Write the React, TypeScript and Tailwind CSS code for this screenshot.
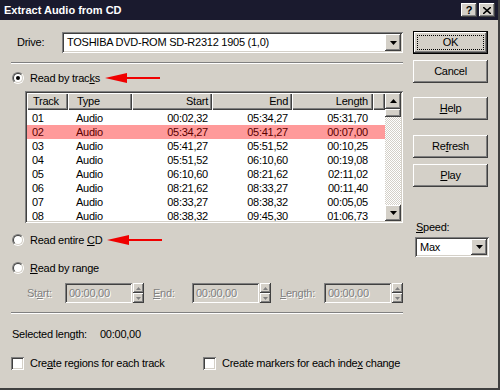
import React from "react";

const raised =
    "shadow-[inset_-1px_-1px_#404040,inset_1px_1px_#ffffff,inset_-2px_-2px_#808080,inset_2px_2px_#d4d0c8]";
const sunken =
    "shadow-[inset_1px_1px_#808080,inset_-1px_-1px_#ffffff,inset_2px_2px_#404040,inset_-2px_-2px_#d4d0c8]";
const headerCell = "shadow-[inset_1px_1px_#ffffff,inset_-1px_-1px_#404040,inset_-2px_-2px_#808080]";
const disabled = "text-[#808080] [text-shadow:1px_1px_#ffffff]";

const TRACKS = [
    ["01", "00:02,32", "05:34,27", "05:31,70"],
    ["02", "05:34,27", "05:41,27", "00:07,00"],
    ["03", "05:41,27", "05:51,52", "00:10,25"],
    ["04", "05:51,52", "06:10,60", "00:19,08"],
    ["05", "06:10,60", "08:21,62", "02:11,02"],
    ["06", "08:21,62", "08:33,27", "00:11,40"],
    ["07", "08:33,27", "08:38,32", "00:05,05"],
    ["08", "08:38,32", "09:45,30", "01:06,73"],
];

function Button({ children, mt, def }: { children: React.ReactNode; mt: string; def?: boolean }) {
    if (def) {
        return (
            <div className={`${mt} w-[75px] h-[23px] border border-black`}>
                <div className={`relative w-full h-full flex items-center justify-center ${raised}`}>
                    <span className="absolute inset-[3px] border border-dotted border-black" />
                    {children}
                </div>
            </div>
        );
    }
    return (
        <div className={`${mt} w-[75px] h-[23px] flex items-center justify-center ${raised}`}>
            {children}
        </div>
    );
}

function Triangle({ up }: { up?: boolean }) {
    return (
        <svg width="7" height="4" viewBox="0 0 7 4" className="block">
            <polygon points={up ? "3.5,0 7,4 0,4" : "0,0 7,0 3.5,4"} fill="#000" />
        </svg>
    );
}

function DropButton() {
    return (
        <div className={`w-[16px] h-full flex items-center justify-center bg-[#d4d0c8] ${raised}`}>
            <Triangle />
        </div>
    );
}

function Radio({ checked, children }: { checked?: boolean; children: React.ReactNode }) {
    return (
        <div className="flex items-center h-[14px]">
            <div className="ml-[12px] w-[12px] h-[12px] rounded-full border border-t-[#808080] border-l-[#808080] border-b-white border-r-white">
                <div className="w-full h-full rounded-full border border-t-[#404040] border-l-[#404040] border-b-[#d4d0c8] border-r-[#d4d0c8] bg-white flex items-center justify-center">
                    {checked && <div className="w-[4px] h-[4px] rounded-full bg-black" />}
                </div>
            </div>
            <span className="ml-[6px]">{children}</span>
        </div>
    );
}

function Check({ children, className }: { children: React.ReactNode; className: string }) {
    return (
        <div className={`flex items-center ${className}`}>
            <div className={`w-[13px] h-[13px] bg-white ${sunken}`} />
            <span className="ml-[6px]">{children}</span>
        </div>
    );
}

function RedArrow() {
    return (
        <svg width="56" height="12" viewBox="0 0 56 12" className="ml-[5px] block">
            <line x1="16" y1="6" x2="55" y2="6" stroke="#f00000" strokeWidth="2" />
            <polygon points="0,6 22,1 22,11" fill="#f00000" />
        </svg>
    );
}

function Spin() {
    return (
        <div className="ml-[1px] w-[11px] h-[20px] flex flex-col">
            <div className={`h-[10px] flex items-center justify-center ${raised}`}>
                <svg width="5" height="3" viewBox="0 0 5 3">
                    <polygon points="2.5,0 5,3 0,3" fill="#808080" />
                </svg>
            </div>
            <div className={`h-[10px] flex items-center justify-center ${raised}`}>
                <svg width="5" height="3" viewBox="0 0 5 3">
                    <polygon points="0,0 5,0 2.5,3" fill="#808080" />
                </svg>
            </div>
        </div>
    );
}

function TimeField({ label, labelW, ml, u }: { label: string; labelW: string; ml: string; u: number }) {
    return (
        <div className={`flex items-center ${ml}`}>
            <span className={`${labelW} ${disabled}`}>
                {label.slice(0, u)}
                <u>{label[u]}</u>
                {label.slice(u + 1)}
            </span>
            <div className={`w-[67px] h-[20px] pl-[4px] flex items-center bg-[#d4d0c8] ${sunken} ${disabled}`}>
                00:00,00
            </div>
            <Spin />
        </div>
    );
}

function TrackList() {
    return (
        <div className={`ml-[25px] mt-[6px] w-[378px] h-[132px] p-[2px] bg-white flex ${sunken}`}>
            <div className="w-[358px] h-full overflow-hidden">
                <div className="flex h-[17px] bg-[#d4d0c8]">
                    <div className={`w-[41px] pl-[6px] flex items-center ${headerCell}`}>Track</div>
                    <div className={`w-[64px] pl-[9px] flex items-center ${headerCell}`}>Type</div>
                    <div className={`w-[80px] pr-[4px] flex items-center justify-end ${headerCell}`}>Start</div>
                    <div className={`w-[80px] pr-[4px] flex items-center justify-end ${headerCell}`}>End</div>
                    <div className={`w-[81px] pr-[5px] flex items-center justify-end ${headerCell}`}>Length</div>
                    <div className={`flex-1 ${headerCell}`} />
                </div>
                <div className="pt-[1px]">
                    {TRACKS.map(([n, s, e, l]) => (
                        <div
                            key={n}
                            className={`flex h-[14px] items-center ${
                                n === "02" ? "bg-[#ff9a9a] text-[#5a0000]" : ""
                            }`}
                        >
                            <div className="w-[41px] pl-[5px]">{n}</div>
                            <div className="w-[64px] pl-[8px]">Audio</div>
                            <div className="w-[80px] pr-[4px] text-right">{s}</div>
                            <div className="w-[80px] pr-[4px] text-right">{e}</div>
                            <div className="w-[81px] pr-[5px] text-right">{l}</div>
                        </div>
                    ))}
                </div>
            </div>
            <div className="w-[16px] h-full flex flex-col">
                <div className={`h-[16px] flex items-center justify-center bg-[#d4d0c8] ${raised}`}>
                    <Triangle up />
                </div>
                <div className={`h-[8px] bg-[#d4d0c8] ${raised}`} />
                <div className="flex-1 bg-[repeating-conic-gradient(#ffffff_0_25%,#d4d0c8_0_50%)] bg-[length:2px_2px]" />
                <div className={`h-[16px] flex items-center justify-center bg-[#d4d0c8] ${raised}`}>
                    <Triangle />
                </div>
            </div>
        </div>
    );
}

function Separator({ mt }: { mt: string }) {
    return <div className={`${mt} ml-[11px] w-[392px] h-[2px] border-t border-t-[#808080] border-b border-b-white`} />;
}

export default function App() {
    return (
        <div className="w-[500px] h-[390px] bg-[#d4d0c8] flex flex-col text-[11px] leading-none text-black font-['Tahoma','Liberation_Sans',Arial,sans-serif] border-r-2 border-r-[#404040] border-b-2 border-b-[#404040]">
            <div className="h-[20px] shrink-0 bg-[#1a1a2e] flex items-center pl-[4px] pr-[3px]">
                <span className="font-bold text-white text-[11px]">Extract Audio from CD</span>
                <div className="ml-auto flex items-center gap-[2px]">
                    <div className={`w-[16px] h-[14px] bg-[#d4d0c8] flex items-center justify-center font-bold text-[11px] ${raised}`}>?</div>
                    <div className={`w-[16px] h-[14px] bg-[#d4d0c8] flex items-center justify-center ${raised}`}>
                        <svg width="8" height="7" viewBox="0 0 8 7">
                            <path d="M0 0L8 7M8 0L0 7" stroke="#000" strokeWidth="1.6" />
                        </svg>
                    </div>
                </div>
            </div>
            <div className="flex flex-1 tracking-[-0.25px]">
                <div className="w-[403px] flex flex-col">
                    <div className="mt-[12px] flex items-center h-[21px]">
                        <span className="ml-[17px] w-[45px]">Drive:</span>
                        <div className={`w-[341px] h-full p-[2px] bg-white flex ${sunken}`}>
                            <div className="flex-1 flex items-center pl-[3px]">TOSHIBA DVD-ROM SD-R2312 1905 (1,0)</div>
                            <DropButton />
                        </div>
                    </div>
                    <Separator mt="mt-[9px]" />
                    <div className="mt-[7px] flex items-center">
                        <Radio checked>
                            Read by trac<u>k</u>s
                        </Radio>
                        <RedArrow />
                    </div>
                    <TrackList />
                    <div className="mt-[10px] flex items-center">
                        <Radio>
                            Read entire <u>C</u>D
                        </Radio>
                        <RedArrow />
                    </div>
                    <div className="mt-[14px]">
                        <Radio>
                            <u>R</u>ead by range
                        </Radio>
                    </div>
                    <div className="mt-[8px] flex items-center">
                        <TimeField label="Start:" labelW="w-[38px]" ml="ml-[27px]" u={2} />
                        <TimeField label="End:" labelW="w-[39px]" ml="ml-[9px]" u={0} />
                        <TimeField label="Length:" labelW="w-[44px]" ml="ml-[9px]" u={0} />
                    </div>
                    <Separator mt="mt-[9px]" />
                    <div className="mt-[13px] h-[14px] flex items-center">
                        <span className="ml-[12px] w-[88px]">Selected length:</span>
                        <span>00:00,00</span>
                    </div>
                    <div className="mt-[15px] h-[14px] flex items-center">
                        <Check className="ml-[11px] w-[192px]">
                            Cre<u>a</u>te regions for each track
                        </Check>
                        <Check className="">
                            Create markers for each inde<u>x</u> change
                        </Check>
                    </div>
                </div>
                <div className="pl-[10px] flex flex-col">
                    <Button mt="mt-[11px]" def>
                        OK
                    </Button>
                    <Button mt="mt-[6px]">Cancel</Button>
                    <Button mt="mt-[14px]">
                        <span>
                            <u>H</u>elp
                        </span>
                    </Button>
                    <Button mt="mt-[15px]">
                        <span>
                            Re<u>f</u>resh
                        </span>
                    </Button>
                    <Button mt="mt-[6px]">
                        <span>
                            <u>P</u>lay
                        </span>
                    </Button>
                    <div className="mt-[33px] ml-[3px] h-[14px] flex items-center">
                        <span>
                            <u>S</u>peed:
                        </span>
                    </div>
                    <div className={`mt-[3px] ml-[2px] w-[74px] h-[20px] p-[2px] bg-white flex ${sunken}`}>
                        <div className="flex-1 flex items-center pl-[3px]">Max</div>
                        <DropButton />
                    </div>
                </div>
            </div>
        </div>
    );
}
